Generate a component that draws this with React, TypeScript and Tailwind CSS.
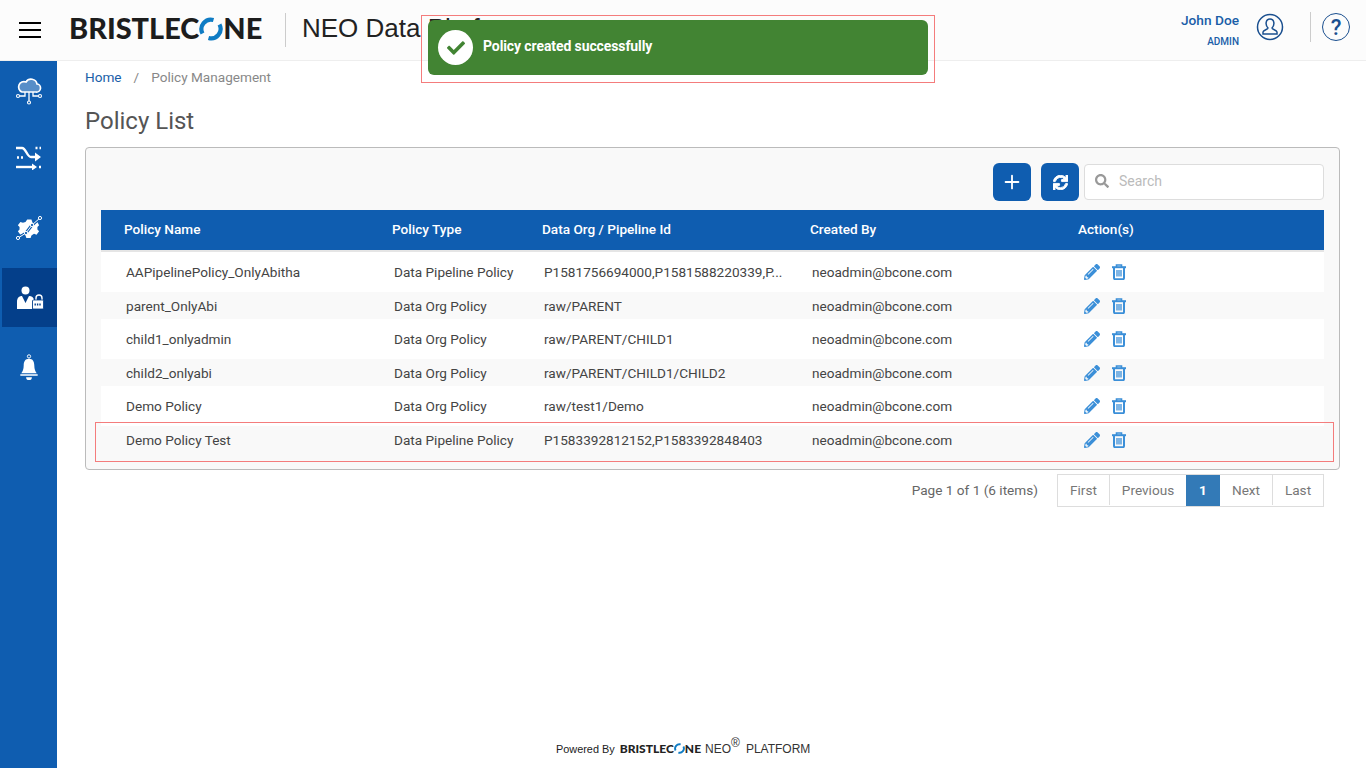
import { Plus } from "lucide-react";
import { FaCheck, FaPencilAlt, FaSearch, FaSync } from "react-icons/fa";

const policies = [
  { name: "AAPipelinePolicy_OnlyAbitha", type: "Data Pipeline Policy", ids: "P1581756694000,P1581588220339,P...", row: "h-10 bg-white" },
  { name: "parent_OnlyAbi", type: "Data Org Policy", ids: "raw/PARENT", row: "h-[27px] bg-[#f9f9f9] pt-[1px]" },
  { name: "child1_onlyadmin", type: "Data Org Policy", ids: "raw/PARENT/CHILD1", row: "h-10 bg-white" },
  { name: "child2_onlyabi", type: "Data Org Policy", ids: "raw/PARENT/CHILD1/CHILD2", row: "h-[27px] bg-[#f9f9f9] pt-[1px]" },
  { name: "Demo Policy", type: "Data Org Policy", ids: "raw/test1/Demo", row: "h-10 bg-white" },
  { name: "Demo Policy Test", type: "Data Pipeline Policy", ids: "P1583392812152,P1583392848403", row: "h-[28px] bg-[#f9f9f9]" },
];

function Logo({ small }: { small?: boolean }) {
  return (
    <span
      className={
        small
          ? "flex items-center font-['Lato','Liberation_Sans',sans-serif] text-[12px] leading-none font-black text-[#222]"
          : "flex items-center font-['Lato','Liberation_Sans',sans-serif] text-[28.9px] leading-none font-black text-[#1d1d1d]"
      }
    >
      BRISTLEC
      <svg viewBox="0 0 24 24" className={small ? "h-[11px] w-[11px]" : "h-[24px] w-[24px]"}>
        <path d="M3.500 16.500A9.500 9.500 0 0 1 14.500 3" fill="none" stroke="#0f7cc4" strokeWidth="4.200" />
        <path d="M20.500 7.500A9.500 9.500 0 0 1 9.500 21" fill="none" stroke="#0f7cc4" strokeWidth="4.200" />
      </svg>
      NE
    </span>
  );
}

function Trash() {
  return (
    <svg viewBox="0 0 14 16" className="h-[16px] w-[14px]" fill="none" stroke="currentColor">
      <path d="M0 3.200h14" strokeWidth="2" />
      <path d="M4.500 3V1h5v2" strokeWidth="1.600" />
      <path d="M2 3.500V14a1.200 1.200 0 0 0 1.200 1.200h7.600A1.200 1.200 0 0 0 12 14V3.500" strokeWidth="2" />
      <path d="M5 6v6.500M7 6v6.500M9 6v6.500" strokeWidth="1.300" />
    </svg>
  );
}

function Sidebar() {
  return (
    <aside className="flex w-[57px] shrink-0 flex-col bg-[#0f5db0] text-white">
      <div className="flex h-[60px] items-center justify-center">
        <svg viewBox="0 0 28 28" className="h-7 w-7" fill="none" stroke="white" strokeWidth="1.700">
          <path d="M7 15h14a4 4 0 0 0 1-8 6 6 0 0 0-11-2 5 5 0 0 0-4 10z" fill="white" fillOpacity=".3" />
          <path d="M14 15v9M10 15v4H4.500M18 15v4h5.500" strokeWidth="1.300" />
          <circle cx="3" cy="19" r="1.500" strokeWidth="1.100" />
          <circle cx="25" cy="19" r="1.500" strokeWidth="1.100" />
          <circle cx="14" cy="25.500" r="1.500" strokeWidth="1.100" />
        </svg>
      </div>
      <div className="flex h-[74px] items-center justify-center">
        <svg viewBox="0 0 25 24" className="h-6 w-[25px]" fill="none" stroke="white" strokeWidth="2.400">
          <path d="M0 2h6c4 0 5 9 9 9h6" />
          <path d="M0 21h17" />
          <path d="M19 6.500l6 4.500-6 4.500zM16 17.500l5 3.500-5 3.500z" fill="white" stroke="none" />
          <path d="M19.500 2h2M23.500 2h1.500M1 11.500h2M5 11.500h2M23 21h2" />
        </svg>
      </div>
      <div className="flex h-[73px] items-center justify-center pb-[6px]">
        <svg viewBox="0 0 28 28" className="h-7 w-7">
          <path d="M12 4h5l1 3 3 1 3-1 2 4-2 2v3l2 2-3 4-3-1-3 2-1 3h-5l-1-3-3-2-3 1-3-4 2-2v-3L1 11l3-4 3 1 3-1z" fill="white" transform="translate(2 1) scale(.85)" />
          <path d="M3 23l8-5 6-8 8-7" fill="none" stroke="#0f5db0" strokeWidth="3" />
          <path d="M3 23l8-5 6-8 8-7" fill="none" stroke="white" strokeWidth="1" />
          <circle cx="25" cy="3" r="1.600" fill="#0f5db0" stroke="white" />
          <circle cx="3" cy="23" r="1.600" fill="#0f5db0" stroke="white" />
          <circle cx="11" cy="18" r="1.600" fill="#0f5db0" stroke="white" />
          <circle cx="17" cy="10" r="1.600" fill="#0f5db0" stroke="white" />
        </svg>
      </div>
      <div className="ml-[2px] flex h-[59px] items-center justify-center bg-[#043f8a]">
        <svg viewBox="0 0 28 24" className="h-6 w-7" fill="white">
          <circle cx="9.500" cy="4.500" r="4" />
          <path d="M1 23v-7c0-4 2-6 5-6l3.500 7L13 10c3 0 4.500 1.500 5 4l-2 1v8z" />
          <path d="M20 14v-2a3 3 0 0 1 6 0v2" fill="none" stroke="white" strokeWidth="1.400" />
          <rect x="16.500" y="14" width="11" height="9" rx="1" stroke="#043f8a" strokeWidth=".8" />
          <path d="M18.500 18.500h7" stroke="#043f8a" strokeWidth="1.800" strokeDasharray="1.400 1" />
        </svg>
      </div>
      <div className="flex h-[80px] items-center justify-center">
        <svg viewBox="0 0 20 28" className="h-[27px] w-5" fill="white">
          <circle cx="10" cy="2.500" r="1.700" fill="none" stroke="white" />
          <path d="M10 5c4 0 5.500 3 5.500 7 0 4 1 6 2.500 8H2c1.500-2 2.500-4 2.500-8 0-4 1.500-7 5.500-7z" />
          <path d="M1 21h18v1.500H1zM7 24h6a3 3 0 0 1-6 0z" />
        </svg>
      </div>
    </aside>
  );
}

export default function App() {
  return (
    <div className="relative flex h-screen flex-col overflow-hidden bg-white font-['Roboto',sans-serif] text-[13.6px] text-[#444]">
      <header className="flex h-[61px] shrink-0 items-center border-b border-[#eeeeee] bg-[#fcfcfc]">
        <div className="ml-[19px] flex w-[22px] flex-col gap-[5px]">
          <span className="h-[2px] bg-black" />
          <span className="h-[2px] bg-black" />
          <span className="h-[2px] bg-black" />
        </div>
        <div className="mb-[3px] ml-[28px] w-[216px]">
          <Logo />
        </div>
        <div className="h-[34px] w-px bg-[#ccc]" />
        <div className="mb-[3px] ml-4 font-['Liberation_Sans',sans-serif] text-[26px] text-[#222]">NEO Data Platform</div>
        <div className="ml-auto flex flex-col items-end text-[#1a5ea8]">
          <span className="text-[13.7px] leading-4 font-medium">John Doe</span>
          <span className="mt-[8px] text-[10px] leading-3 font-medium">ADMIN</span>
        </div>
        <svg viewBox="0 0 28 28" className="mb-[6px] ml-[17px] h-7 w-7" fill="none" stroke="#1a4f8f" strokeWidth="1.500">
          <circle cx="14" cy="14" r="12.500" />
          <path d="M7 21v-2c0-2 5-2.500 5-4-3-3-2.500-9 2-9s5 6 2 9c0 1.500 5 2 5 4v2z" />
        </svg>
        <div className="mb-[6px] ml-[26px] h-[30px] w-px bg-[#ccc]" />
        <div className="mr-4 mb-[6px] ml-[11px] flex h-7 w-7 items-center justify-center rounded-full border-[1.500px] border-[#1a4f8f] text-[22px] font-medium text-[#1a4f8f]">
          ?
        </div>
      </header>

      <div className="flex min-h-0 flex-1">
        <Sidebar />
        <main className="flex min-w-0 flex-1 flex-col pr-[26px] pl-[28px]">
          <nav className="mt-2 flex h-4 items-center text-[#888]">
            <span className="text-[#1a5ea8]">Home</span>
            <span className="mx-[12px]">/</span>
            <span>Policy Management</span>
          </nav>
          <h1 className="mt-[22px] text-2xl leading-[28px] text-[#555]">Policy List</h1>

          <section className="mt-[12px] h-[323px] rounded border border-[#bbb] bg-[#f9f9f9] px-[15px] pt-[15px]">
            <div className="flex h-[38px] items-center justify-end">
              <button className="flex h-[38px] w-[38px] items-center justify-center rounded-md bg-[#0f5db0] text-white">
                <Plus size={22} strokeWidth={2} />
              </button>
              <button className="ml-[10px] flex h-[38px] w-[38px] items-center justify-center rounded-md bg-[#0f5db0] text-white">
                <FaSync size={15} stroke="currentColor" strokeWidth={30} />
              </button>
              <div className="ml-[5px] flex h-9 w-[240px] items-center rounded border border-[#ddd] bg-white pb-[2px] pl-[10px]">
                <FaSearch size={14} className="text-[#999]" />
                <span className="ml-[10px] text-sm text-[#bbb]">Search</span>
              </div>
            </div>

            <div className="mt-[9px] grid h-[40px] grid-cols-[268px_150px_268px_268px_1fr] items-center bg-[#0f5db0] pb-[1px] pl-[23px] font-medium text-white">
              <span>Policy Name</span>
              <span>Policy Type</span>
              <span>Data Org / Pipeline Id</span>
              <span>Created By</span>
              <span>Action(s)</span>
            </div>
            <div className="h-[2px] bg-[#e5e5e5]" />

            {policies.map((p) => (
              <div key={p.name} className={"grid grid-cols-[268px_150px_268px_268px_1fr] items-center pl-[25px] " + p.row}>
                <span>{p.name}</span>
                <span>{p.type}</span>
                <span>{p.ids}</span>
                <span>neoadmin@bcone.com</span>
                <span className="flex items-center gap-[12px] pb-[1px] pl-[4px] text-[#3b8fd8]">
                  <FaPencilAlt size={16} />
                  <Trash />
                </span>
              </div>
            ))}
          </section>

          <div className="mt-[4px] flex h-[33px] items-center justify-end pr-[16px]">
            <span className="mr-[19px] text-[#666]">Page 1 of 1 (6 items)</span>
            <div className="flex h-[33px] border border-[#ddd] pb-[1px] text-[#777]">
              <span className="flex w-[52px] items-center justify-center border-r border-[#ddd]">First</span>
              <span className="flex w-[76px] items-center justify-center">Previous</span>
              <span className="-mb-[1px] flex w-[34px] items-center justify-center bg-[#337ab7] font-bold text-white">1</span>
              <span className="flex w-[53px] items-center justify-center border-r border-[#ddd]">Next</span>
              <span className="flex w-[50px] items-center justify-center">Last</span>
            </div>
          </div>

          <footer className="mt-auto mb-[11px] ml-[471px] flex items-center font-['Liberation_Sans',sans-serif] text-[#222]">
            <span className="mr-[5px] text-[10.9px]">Powered By</span>
            <Logo small />
            <span className="ml-[4px] text-xs text-[#333]">
              NEO<sup className="text-[12px]">®</sup>
              <span className="ml-[6px]">PLATFORM</span>
            </span>
          </footer>
        </main>
      </div>

      {/* toast and its red highlight lie over the header */}
      <div className="absolute top-[15px] left-[421px] h-[68px] w-[514px] border border-[#f47c7c] p-[4px_6px]">
        <div className="flex h-[55px] w-[500px] items-center rounded-md bg-[#428433] pl-[10px] text-white">
          <span className="flex h-[35px] w-[35px] items-center justify-center rounded-full bg-white text-[#428433]">
            <FaCheck size={18} />
          </span>
          <span className="mb-[3px] ml-[10px] text-sm font-bold tracking-[-0.1px]">Policy created successfully</span>
        </div>
      </div>
      <div className="absolute top-[422px] left-[95px] h-[40px] w-[1239px] border border-[#f47c7c]" />
    </div>
  );
}
